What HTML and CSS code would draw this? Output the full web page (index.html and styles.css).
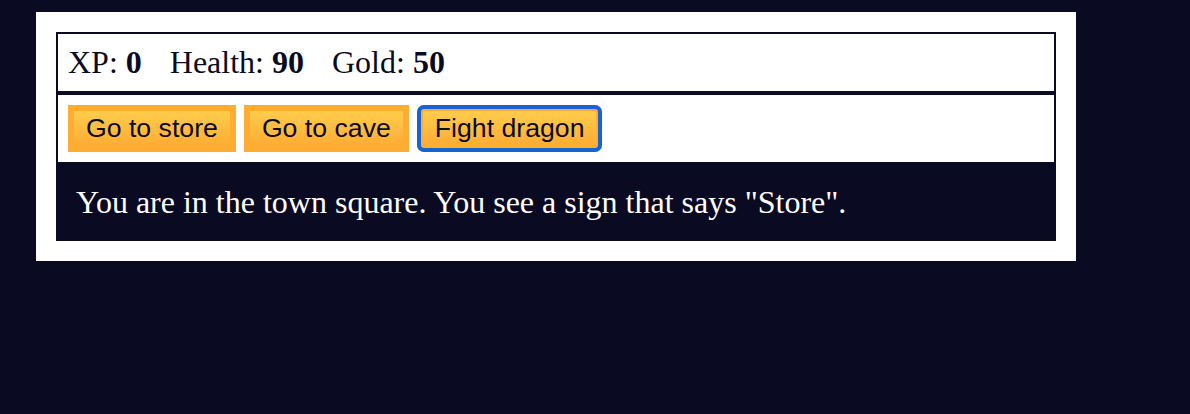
FILE: index.html
```html
<!DOCTYPE html>
<html>
<head>
<meta charset="utf-8">
<link rel="stylesheet" href="styles.css">
</head>
<body>
<div class="game">
  <div class="stats">
    <span class="stat">XP: <strong>0</strong></span>
    <span class="stat">Health: <strong>90</strong></span>
    <span class="stat">Gold: <strong>50</strong></span>
  </div>
  <div class="controls">
    <button class="btn">Go to store</button>
    <button class="btn">Go to cave</button>
    <button class="btn btn-focus">Fight dragon</button>
  </div>
  <div class="text">You are in the town square. You see a sign that says "Store".</div>
</div>
</body>
</html>
```

FILE: styles.css
```css
html, body {
  margin: 0;
  padding: 0;
}
body {
  background-color: #0a0a23;
  font-family: "Liberation Serif", "Times New Roman", serif;
  font-size: 32px;
}
.game {
  width: 1000px;
  background-color: #ffffff;
  color: #ffffff;
  margin: 12px 0 0 36px;
  padding: 20px;
}
.stats,
.controls {
  border: 2px solid #0a0a23;
  padding: 10px;
  color: #0a0a23;
}
.stats {
  line-height: 37px;
}
.stat {
  padding-right: 20px;
}
.controls {
  display: flex;
  gap: 8px;
}
.btn {
  cursor: pointer;
  font-family: "Liberation Sans", Arial, sans-serif;
  font-size: 26.67px;
  line-height: 31px;
  padding: 2px 12px;
  margin: 0;
  color: #0a0a23;
  background-color: #feac32;
  background-image: linear-gradient(#fecc4c, #ffac33);
  border: 6px solid #feac32;
}
.btn-focus {
  border-radius: 7px;
  outline: 4px solid #1763d6;
  outline-offset: -4px;
}
.text {
  background-color: #0a0a23;
  color: #ffffff;
  padding: 20px;
  line-height: 37px;
}
```
